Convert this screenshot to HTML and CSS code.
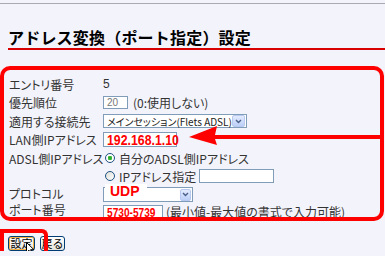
FILE: index.html
```html
<!DOCTYPE html>
<html lang="ja">
<head>
    <meta charset="UTF-8">
    <meta name="viewport" content="width=device-width, initial-scale=1.0">
    <title>アドレス変換(ポート指定)設定</title>
    <link rel="stylesheet" href="styles.css">
</head>
<body>
    <div class="topline"></div>
    <h1 class="title">アドレス変換（ポート指定）設定</h1>

    <div class="panel">
        <div class="label">エントリ番号</div>
        <div class="value"><span class="plain">5</span></div>

        <div class="label">優先順位</div>
        <div class="value">
            <span class="field field-prio">20</span>
            <span class="note note-prio">(0:使用しない)</span>
        </div>

        <div class="label">適用する接続先</div>
        <div class="value">
            <span class="select select-conn">
                <span class="select-text">メインセッション(Flets ADSL)</span>
                <span class="select-btn"><svg width="7" height="5" viewBox="0 0 7 5"><path d="M1 1 L3.5 3.5 L6 1" fill="none" stroke="#4a5f8a" stroke-width="1.4"/></svg></span>
            </span>
        </div>

        <div class="label">LAN側IPアドレス</div>
        <div class="value">
            <span class="field field-lan"><span class="mark mark-lan">192.168.1.10</span></span>
        </div>

        <div class="label">ADSL側IPアドレス</div>
        <div class="value">
            <span class="radio checked"></span>
            <span class="radio-text">自分のADSL側IPアドレス</span>
        </div>

        <div class="label"></div>
        <div class="value">
            <span class="radio"></span>
            <span class="radio-text">IPアドレス指定</span>
            <span class="field field-ip"></span>
        </div>

        <div class="label">プロトコル</div>
        <div class="value value-proto">
            <span class="select select-proto">
                <span class="select-text"></span>
                <span class="select-btn"><svg width="7" height="5" viewBox="0 0 7 5"><path d="M1 1 L3.5 3.5 L6 1" fill="none" stroke="#4a5f8a" stroke-width="1.4"/></svg></span>
            </span>
            <span class="udp">UDP</span>
        </div>

        <div class="label">ポート番号</div>
        <div class="value value-port">
            <span class="field field-port"><span class="mark mark-port">5730-5739</span></span>
            <span class="note note-port">(最小値-最大値の書式で入力可能)</span>
        </div>

        <!-- annotation arrow -->
        <svg class="arrow" width="191" height="20" viewBox="0 0 191 20">
            <polygon points="0,11 28,0 26,9 191,9 191,13 26,13 28,19" fill="#f00"/>
        </svg>
    </div>

    <div class="actions">
        <button type="button" class="btn btn-focus">設定</button>
        <button type="button" class="btn">戻る</button>
        <div class="focus-box"></div>
        <svg class="cursor" width="9" height="13" viewBox="0 0 9 13">
            <path d="M0.5 0.5 L0.5 10.5 L3 8.2 L4.8 12.3 L6.3 11.6 L4.6 7.7 L8 7.7 Z" fill="#fff" stroke="#000" stroke-width="1"/>
        </svg>
    </div>
</body>
</html>
```

FILE: styles.css
```css
/* XP-era router settings page */
html, body {
    overflow: hidden;
}

body {
    margin: 0;
    background-color: #f3f3fb;
    color: #333;
    font-family: 'Noto Sans CJK JP', sans-serif;
    font-size: 12px;
    font-feature-settings: "palt";
}

.topline {
    height: 1px;
    margin-top: 3px;
    background-color: #a9a9b2;
}

.title {
    margin: 23px 0 0 8px;
    padding-bottom: 1px;
    font-size: 16px;
    line-height: 20px;
    font-weight: bold;
    letter-spacing: 0.2px;
    color: #000;
    font-feature-settings: normal;
    border-bottom: 2px solid #d80000;
}

.panel {
    position: relative;
    display: grid;
    grid-template-columns: 94px 1fr;
    grid-template-rows: 18px 19px 18px 19px 18px 18px 17px 15px;
    margin: 16px 1px 0 0;
    padding: 5px 0 0 5px;
    border: 4px solid #f00;
    border-radius: 10px;
    overflow: hidden;
}

.label, .value {
    display: flex;
    align-items: center;
    white-space: nowrap;
}

.value {
    position: relative;
}

.plain {
    font-family: 'Liberation Sans', sans-serif;
    font-size: 12px;
}

.field {
    display: inline-flex;
    align-items: center;
    box-sizing: border-box;
    background-color: #fff;
    border: 1px solid #7f9db9;
}

.field-prio {
    width: 25px;
    height: 13px;
    padding-left: 3px;
    font-family: 'Liberation Sans', sans-serif;
    font-size: 10px;
    color: #777;
}

.note-prio {
    margin-left: 5px;
}

.select {
    display: inline-flex;
    align-items: center;
    box-sizing: border-box;
    background-color: #fff;
    border: 1px solid #7f9db9;
    padding: 0 1px 0 3px;
}

.select-conn {
    width: 144px;
    height: 14px;
}

.select-text {
    font-size: 10px;
    color: #222;
}

.select-btn {
    display: flex;
    align-items: center;
    justify-content: center;
    margin-left: auto;
    width: 13px;
    height: 10px;
    border: 1px solid #b7c9f0;
    border-radius: 2px;
    background: linear-gradient(#e3ebfe, #bccff7);
}

.field-lan {
    width: 74px;
    height: 15px;
    padding-left: 3px;
}

.mark {
    display: inline-block;
    color: #f00;
    font-family: 'Liberation Sans', sans-serif;
    font-weight: bold;
    transform-origin: left center;
}

.mark-lan {
    font-size: 14px;
    transform: scaleX(0.88);
}

.radio {
    box-sizing: border-box;
    width: 10px;
    height: 10px;
    margin-left: 2px;
    border: 1px solid #1c5180;
    border-radius: 50%;
    background: linear-gradient(135deg, #dcdcd6, #fff);
}

.radio.checked {
    background: radial-gradient(circle, #22a622 0, #3dbb3d 2px, #fff 2.5px);
}

.radio-text {
    margin-left: 4px;
}

.field-ip {
    width: 75px;
    height: 14px;
    margin-left: 3px;
}

.value-proto {
    align-items: flex-end;
}

.select-proto {
    width: 90px;
    height: 15px;
}

.select-proto .select-btn {
    width: 9px;
}

/* red overlay text pasted on top of the select */
.udp {
    position: absolute;
    left: 2px;
    top: -1px;
    width: 42px;
    height: 14px;
    padding-left: 5px;
    box-sizing: border-box;
    background-color: #fff;
    color: #f00;
    font-family: 'Liberation Sans', sans-serif;
    font-weight: bold;
    font-size: 14px;
    line-height: 14px;
}

.value-port {
    align-items: flex-start;
    padding-top: 3px;
}

.field-port {
    width: 60px;
    height: 15px;
    padding-left: 3px;
}

.mark-port {
    font-size: 13px;
    transform: scaleX(0.78);
}

.note-port {
    margin-left: 3px;
    margin-top: -2px;
}

.arrow {
    position: absolute;
    left: 185px;
    top: 56px;
}

.actions {
    position: relative;
    display: flex;
    gap: 5px;
    margin: 15px 0 0 8px;
}

.btn {
    box-sizing: border-box;
    height: 15px;
    padding: 0;
    font-family: 'Noto Sans CJK JP', sans-serif;
    font-size: 11px;
    line-height: 11px;
    color: #000;
    border: 1px solid #003c74;
    border-radius: 3px;
    background: linear-gradient(#fff, #e6e5de);
}

.btn-focus {
    width: 27px;
    box-shadow: inset 0 0 0 1px #f5b143;
}

.btn + .btn {
    width: 25px;
}

.focus-box {
    position: absolute;
    left: -8px;
    top: -7px;
    width: 48px;
    height: 28px;
    box-sizing: border-box;
    border: 4px solid #f00;
    border-bottom: none;
    border-radius: 0 6px 0 0;
}

.cursor {
    position: absolute;
    left: 18px;
    top: 6px;
}
```
